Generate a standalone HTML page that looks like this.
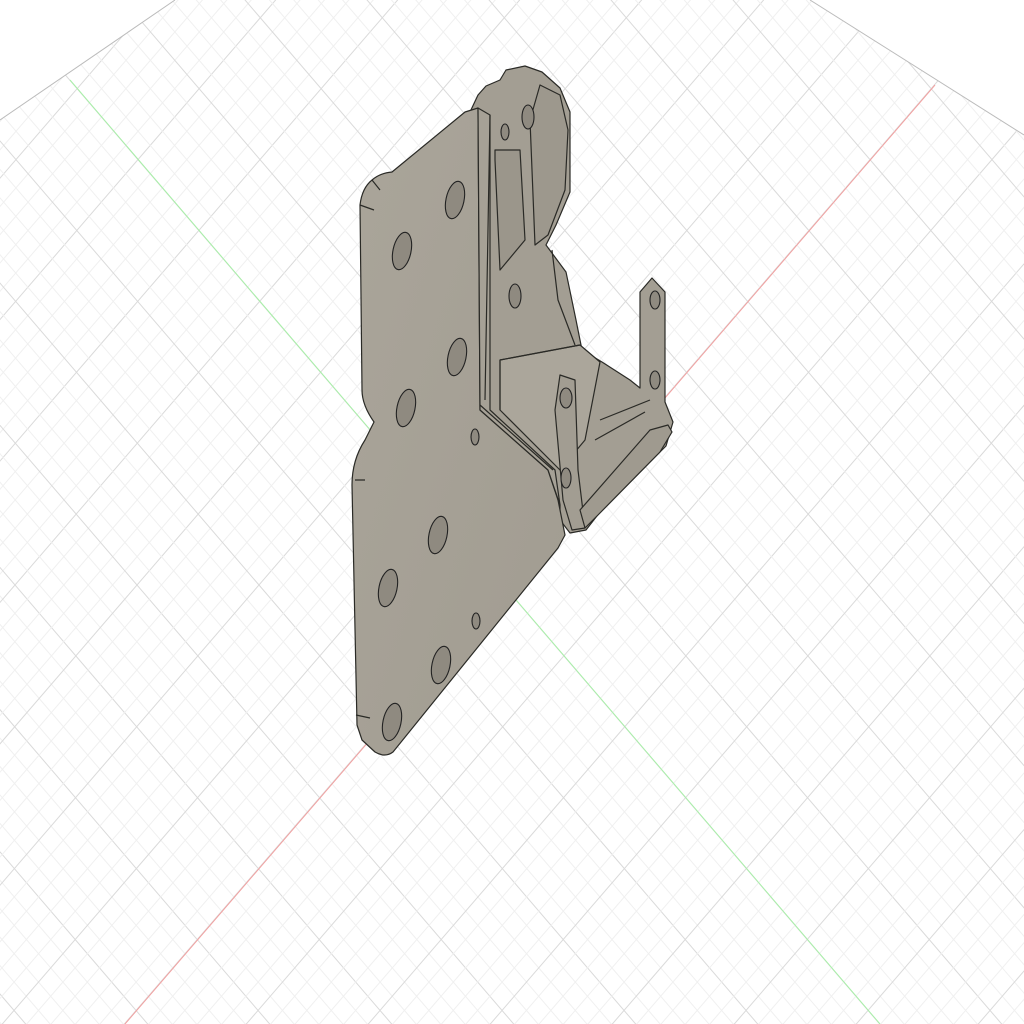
<!DOCTYPE html>
<html><head><meta charset="utf-8"><style>
html,body{margin:0;padding:0;background:#fff;width:1024px;height:1024px;overflow:hidden}
svg{display:block}
</style></head><body>
<svg id="s" width="1024" height="1024" viewBox="0 0 1024 1024" xmlns="http://www.w3.org/2000/svg">
<defs>
<clipPath id="c"><polygon points="0,120 175,0 810,0 1024,135 1024,1024 0,1024"/></clipPath>
<linearGradient id="g" x1="0" y1="0" x2="1" y2="1">
<stop offset="0" stop-color="#aaa59a"/><stop offset="1" stop-color="#a19c91"/></linearGradient>
</defs>
<g id="grid" clip-path="url(#c)"></g>
<line x1="125" y1="1024" x2="935" y2="85" stroke="#f2a0a0" stroke-width="1"/>
<line x1="70" y1="80" x2="880" y2="1024" stroke="#a8f0a8" stroke-width="1"/>
<line x1="0" y1="120" x2="175" y2="0" stroke="#bbb" stroke-width="1"/>
<line x1="810" y1="0" x2="1024" y2="135" stroke="#bbb" stroke-width="1"/>
<g stroke="#2a2a26" stroke-width="1.2" stroke-linejoin="round">
<!-- mechanism -->
<path fill="#a39e93" d="M470,112 L478,95 L486,86 L500,80 L506,70 L525,66 L542,72 L560,88 L570,112 L570,192 L556,225 L546,245 L566,272 L576,320 L582,350 L602,362 L630,380 L640,388 L640,292 L652,278 L665,292 L665,402 L673,422 L666,446 L600,512 L586,530 L570,533 L560,520 L560,505 L548,470 L480,410 Z"/>
<!-- plate -->
<path fill="url(#g)" d="M372,180 Q380,173 392,172 L465,112 L478,108 L480,410 L548,470 L558,500 L565,535 L558,548 L393,752 Q385,758 375,752 L362,740 L357,725 L352,485 Q352,460 365,440 L374,422 Q362,405 362,390 L360,205 Q362,188 372,180 Z"/>
<path fill="#a6a196" d="M478,108 L490,115 L490,410 L555,470 L560,505 L548,470 L480,410 Z"/>
<path fill="#aba69b" d="M500,360 L580,345 L600,362 L585,440 L560,470 L500,410 Z"/>
<path fill="none" d="M480,405 L553,470 M490,115 L485,400 M552,250 L558,300 L575,345 M500,360 L580,345 M500,360 L500,410 M560,378 L575,395 L575,470 L585,528 M580,510 L655,430 M600,420 L650,400 M595,440 L645,412"/>
<path fill="#9b968b" d="M495,150 L520,150 L525,240 L500,270 L495,160 Z"/>
<path fill="#9d988d" d="M540,85 L560,95 L568,130 L565,190 L548,235 L535,245 L530,120 Z"/>
<path fill="#a29d92" d="M560,375 L575,380 L578,470 L585,528 L572,530 L563,500 L555,410 Z"/>
<path fill="#9f9a8f" d="M580,510 L650,430 L668,425 L672,432 L660,452 L598,515 L585,528 Z"/>
<path fill="none" d="M355,480 L365,480 M360,205 L374,210 M372,180 L380,190 M356,715 L370,718"/>
</g>
<g fill="#8f8a80" stroke="#222" stroke-width="1.1">
<ellipse cx="455" cy="200" rx="9" ry="19" transform="rotate(12 455 200)"/>
<ellipse cx="402" cy="251" rx="9" ry="19" transform="rotate(12 402 251)"/>
<ellipse cx="457" cy="357" rx="9" ry="19" transform="rotate(12 457 357)"/>
<ellipse cx="406" cy="408" rx="9" ry="19" transform="rotate(12 406 408)"/>
<ellipse cx="438" cy="535" rx="9" ry="19" transform="rotate(12 438 535)"/>
<ellipse cx="388" cy="588" rx="9" ry="19" transform="rotate(12 388 588)"/>
<ellipse cx="441" cy="665" rx="9" ry="19" transform="rotate(12 441 665)"/>
<ellipse cx="392" cy="722" rx="9" ry="19" transform="rotate(12 392 722)"/>
<ellipse cx="475" cy="437" rx="4" ry="8"/>
<ellipse cx="476" cy="621" rx="4" ry="8"/>
<ellipse cx="515" cy="296" rx="6" ry="12"/>
<ellipse cx="528" cy="117" rx="6" ry="12"/>
<ellipse cx="505" cy="132" rx="4" ry="8"/>
<ellipse cx="566" cy="398" rx="6" ry="10"/>
<ellipse cx="566" cy="478" rx="5" ry="10"/>
<ellipse cx="655" cy="300" rx="5" ry="9"/>
<ellipse cx="655" cy="380" rx="5" ry="9"/>
</g>
</svg>
<script>
var g=document.getElementById('grid'),h='';
function L(x1,y1,x2,y2,c){h+='<line x1="'+x1+'" y1="'+y1+'" x2="'+x2+'" y2="'+y2+'" stroke="'+c+'" stroke-width="1"/>';}
var ox=503,oy=585,s=24.4;
for(var k=-80;k<=80;k++){
 var c=(k%5==0)?'#dadada':'#f0f0f0';
 var x0=ox+k*s;
 L(x0+(-200-oy)*810/944,-200,x0+(1224-oy)*810/944,1224,c);
 L(x0-(-200-oy)*810/939,-200,x0-(1224-oy)*810/939,1224,c);
}
g.innerHTML=h;
</script>
</body></html>
